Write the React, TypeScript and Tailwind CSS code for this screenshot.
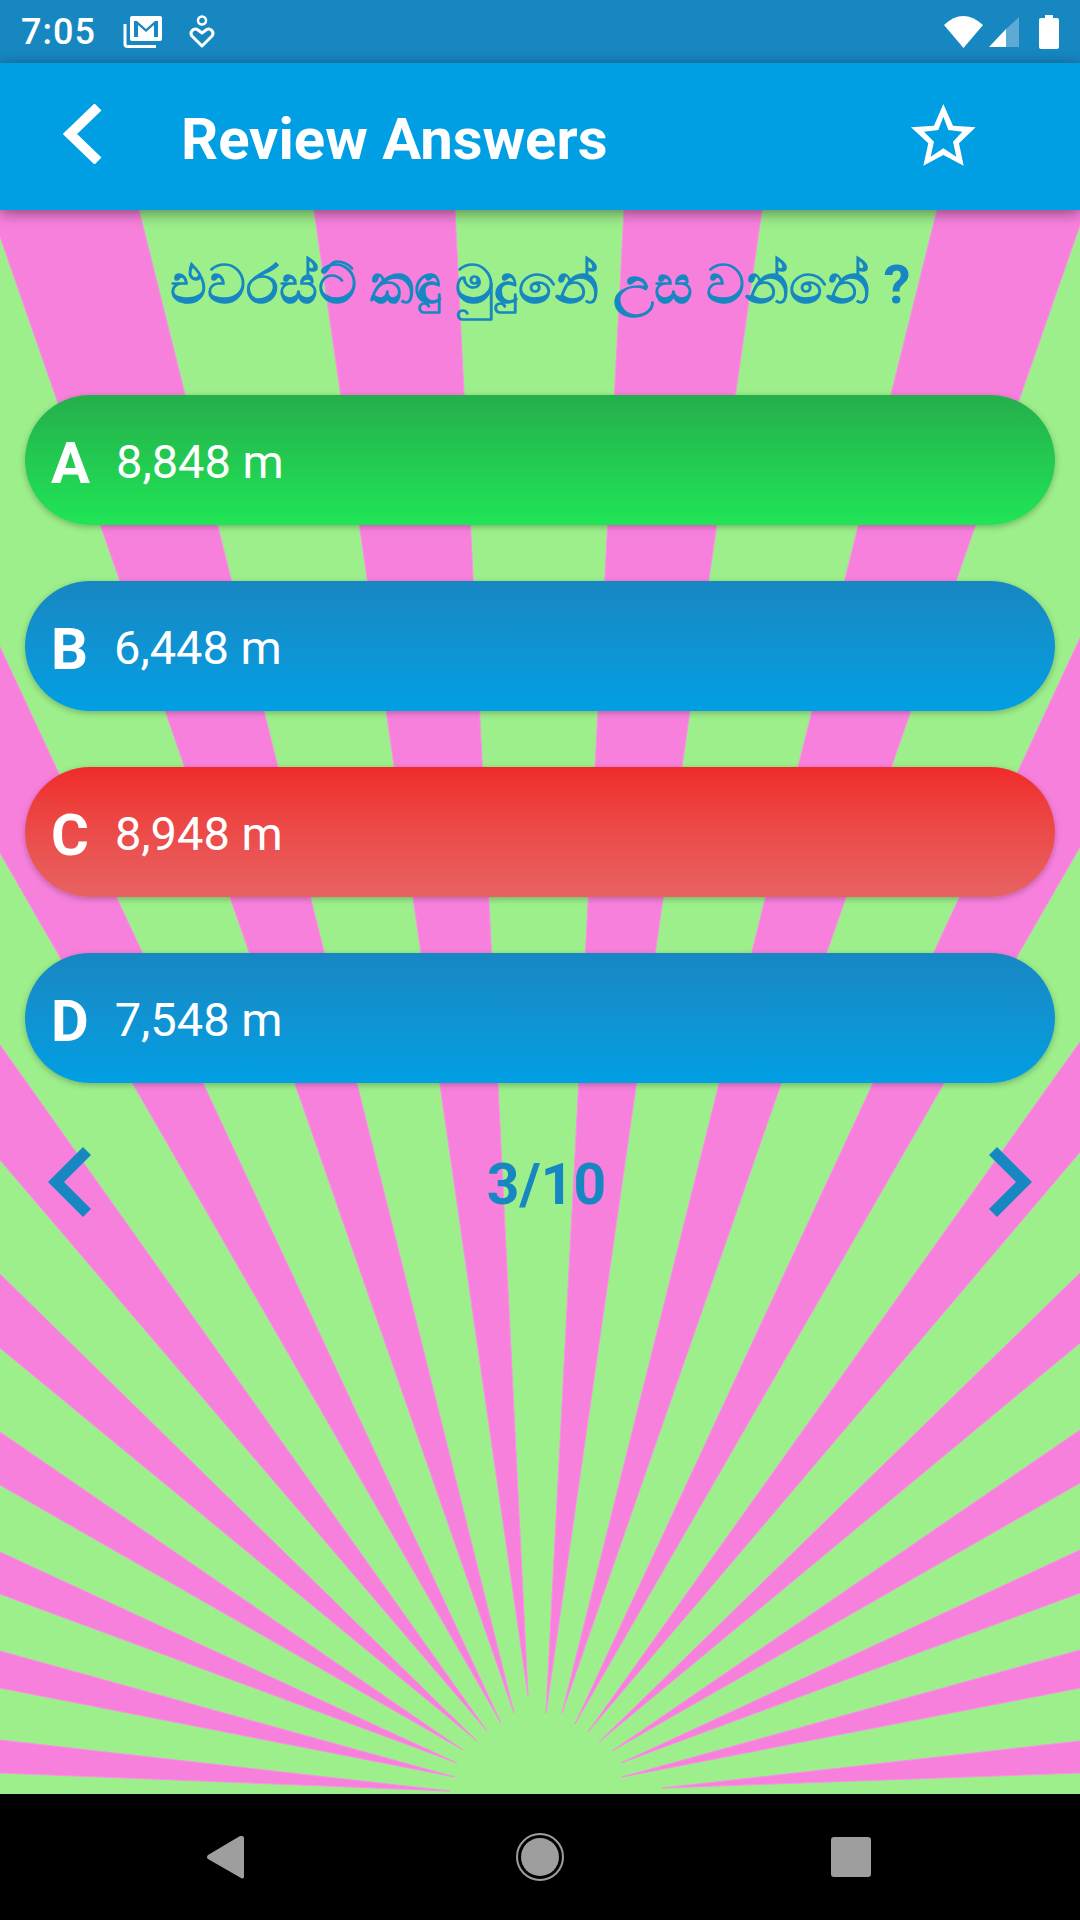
// Quiz "Review Answers" screen
const blue = 'bg-gradient-to-b from-[#1787c2] to-[#009fe3]';

const answers = [
  { letter: 'A', text: '8,848 m', tone: 'bg-gradient-to-b from-[#24af4b] to-[#20e556]' },
  { letter: 'B', text: '6,448 m', tone: blue },
  { letter: 'C', text: '8,948 m', tone: 'bg-gradient-to-b from-[#ef2a2a] to-[#e76262]' },
  { letter: 'D', text: '7,548 m', tone: blue },
];

// tip of the ray, then one point on each of its long edges
const rays: number[][] = [
  [528, 1696, 314, 210, 455, 210],
  [514, 1713, 36, 340, 139, 210],
  [501, 1723, 0, 853, 0, 647],
  [487, 1731, 0, 1160, 0, 1045],
  [477, 1741, 0, 1348, 0, 1274],
  [463, 1750, 0, 1432, 0, 1485],
  [457, 1763, 0, 1552, 0, 1594],
  [455, 1777, 0, 1651, 0, 1688],
  [450, 1791, 0, 1740, 0, 1773],
  [546, 1713, 624, 210, 762, 210],
  [562, 1713, 937, 210, 1040, 340],
  [575, 1724, 1080, 638, 1080, 847],
  [588, 1732, 1080, 1042, 1080, 1152],
  [599, 1742, 1080, 1273, 1080, 1343],
  [612, 1751, 1080, 1430, 1080, 1483],
  [621, 1763, 1080, 1550, 1080, 1593],
  [622, 1777, 1080, 1650, 1080, 1688],
  [662, 1788, 1080, 1741, 1080, 1773],
];

function rayPoints([tx, ty, ax, ay, bx, by]: number[]) {
  const k = 8;
  return `${tx},${ty} ${tx + (ax - tx) * k},${ty + (ay - ty) * k} ${tx + (bx - tx) * k},${ty + (by - ty) * k}`;
}

function Sunburst() {
  // the picture's top is at y=210 and its bottom at y=1794 of the screen
  return (
    <svg className="absolute inset-0 h-full w-full" viewBox="0 210 1080 1584" preserveAspectRatio="none">
      <rect x="0" y="210" width="1080" height="1584" fill="#9def8b" />
      {rays.map((r, i) => (
        <polygon key={i} points={rayPoints(r)} fill="#f880dd" stroke="#fb8fe6" strokeWidth="1" />
      ))}
    </svg>
  );
}

function StatusBar() {
  return (
    <div className="flex h-[63px] shrink-0 items-center bg-[#1787c2] text-white">
      <span className="ml-[21px] w-[102px] text-[36px] leading-none font-medium tracking-[1px]">7:05</span>
      <svg width="40" height="33" viewBox="0 0 40 33" className="mt-[-1px]">
        <path d="M2 9v20a2.500 2.500 0 0 0 2.500 2.500H33" fill="none" stroke="#fff" strokeWidth="3" />
        <path
          d="M9 1h28a2 2 0 0 1 2 2v21a2 2 0 0 1-2 2H9a2 2 0 0 1-2-2V3a2 2 0 0 1 2-2zm2 5v16h4V10l8 7 8-7v12h4V6h-3l-9 8-9-8z"
          fill="#fff"
          fillRule="evenodd"
        />
      </svg>
      <svg width="26" height="34" viewBox="0 0 26 34" className="ml-[26px]">
        <circle cx="13" cy="5.500" r="4" fill="none" stroke="#fff" strokeWidth="2.500" />
        <path
          d="M13 31 3 21c-3-4 2-9 6-6l4 3 4-3c4-3 9 2 6 6z"
          fill="none"
          stroke="#fff"
          strokeWidth="3"
          strokeLinejoin="round"
        />
      </svg>
      <div className="ml-auto flex items-center">
        <svg width="40" height="33" viewBox="0 0 40 33">
          <path d="M0 10Q19-8 39 10L19.500 33z" fill="#fff" />
        </svg>
        <svg width="32" height="32" viewBox="0 0 32 32" className="ml-[4px]">
          <path d="M31 1v30H18V13z" fill="#fff" fillOpacity=".3" />
          <path d="M18 13v18H1z" fill="#fff" />
        </svg>
        <svg width="20" height="34" viewBox="0 0 20 34" className="ml-[19px] mr-[21px]">
          <path d="M6 0h8v3h4a2 2 0 0 1 2 2v27a2 2 0 0 1-2 2H2a2 2 0 0 1-2-2V5a2 2 0 0 1 2-2h4z" fill="#fff" />
        </svg>
      </div>
    </div>
  );
}

function Header() {
  return (
    <div className="relative z-10 flex h-[147px] shrink-0 items-center bg-[#009fe3] pb-[6px] text-white shadow-[0_3px_14px_rgba(0,0,0,0.45)]">
      <svg width="40" height="60" viewBox="0 0 40 60" className="ml-[63px]">
        <path d="M35 3 7 30l28 27" fill="none" stroke="#fff" strokeWidth="10" />
      </svg>
      <h1 className="ml-[78px] pt-[10px] text-[58px] leading-none font-bold">Review Answers</h1>
      <svg width="66" height="64" viewBox="96 72 198 192" className="ml-auto mr-[103px] mt-[5px]">
        <path
          d="M193 72 222 137 290 142 240 190 254 257 193 225 133 257 148 190 96 142 165 137zM193 110 178 150 135 155 165 185 155 230 193 205 232 230 222 185 250 155 208 150z"
          fill="#fff"
          fillRule="evenodd"
        />
      </svg>
    </div>
  );
}

function NavBar() {
  return (
    <div className="relative z-10 flex h-[126px] shrink-0 items-center bg-black pl-[207px]">
      <svg width="37" height="43" viewBox="0 0 37 43">
        <path d="M35 0a2 2 0 0 1 2 2v39a2 2 0 0 1-3 1L1 23a2.500 2.500 0 0 1 0-4L33 0z" fill="#9e9e9e" />
      </svg>
      <svg width="48" height="48" viewBox="0 0 48 48" className="ml-[272px]">
        <circle cx="24" cy="24" r="23" fill="none" stroke="#9e9e9e" strokeWidth="2" />
        <circle cx="24" cy="24" r="19" fill="#9e9e9e" />
      </svg>
      <div className="ml-[267px] h-[40px] w-[40px] rounded-[3px] bg-[#9e9e9e]" />
    </div>
  );
}

export default function App() {
  return (
    <div
      className="flex h-[1920px] w-[1080px] flex-col overflow-hidden"
      style={{ fontFamily: 'Roboto, "Noto Sans", sans-serif' }}
    >
      <StatusBar />
      <Header />

      <main className="relative flex-1 px-[25px]">
        <Sunburst />
        <div className="relative flex flex-col">
          <h2 className="mt-[50px] text-center text-[54px] leading-[50px] font-bold text-[#1787c2]">
            එවරස්ට් කඳු මුදුනේ උස වන්නේ ?
          </h2>

          <div className="mt-[85px] flex flex-col gap-[56px]">
            {answers.map((a) => (
              <div
                key={a.letter}
                className={`flex h-[130px] items-center gap-[26px] rounded-[65px] pl-[26px] text-white shadow-[0_2px_6px_rgba(0,0,0,0.25)] ${a.tone}`}
              >
                <span className="pt-[5px] text-[58px] leading-none font-bold">{a.letter}</span>
                <span className="pt-[3px] text-[47px] leading-none">{a.text}</span>
              </div>
            ))}
          </div>

          <div className="mt-[64px] flex items-center justify-between pl-[23px] pr-[23px]">
            <svg width="43" height="70" viewBox="0 0 43 70">
              <polygon points="35,0 0,35 35,70 43,62 16,35 43,8" fill="#1787c2" />
            </svg>
            <span className="ml-[13px] pt-[4px] text-[57px] leading-none font-bold text-[#1787c2]">3/10</span>
            <svg width="43" height="70" viewBox="0 0 43 70">
              <polygon points="8,0 43,35 8,70 0,62 27,35 0,8" fill="#1787c2" />
            </svg>
          </div>
        </div>
      </main>

      <NavBar />
    </div>
  );
}
